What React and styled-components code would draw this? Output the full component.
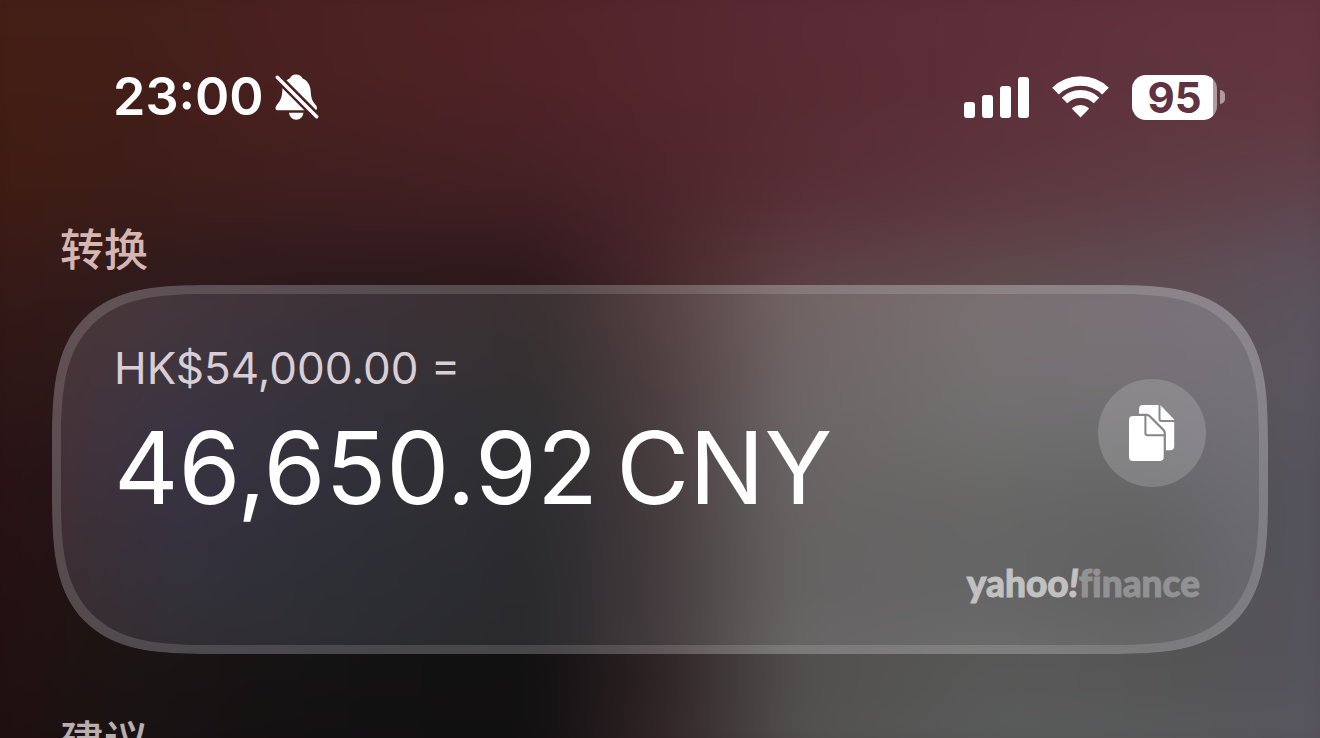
import React from "react";
import styled, { createGlobalStyle, css } from "styled-components";

const GlobalStyle = createGlobalStyle`
  *, *::before, *::after { box-sizing: border-box; }
  html, body { margin: 0; padding: 0; background: #1b1213; }
  body {
    font-family: Inter, "Noto Sans CJK SC", sans-serif;
    color: #fff;
    -webkit-font-smoothing: antialiased;
  }
`;

/* Each row is a vertical position in percent and the colours across it. */
const wallpaper = [
  [0, "#462017, #46201a, #4c2221, #542529, #57272f, #5a2b36, #5f2f3a, #62323e, #65333f"],
  [16, "#431e13, #421e18, #4a2120, #4f2328, #55262d, #582b33, #5d303a, #60353f, #64363f"],
  [29, "#401c12, #3d1d18, #3f1f20, #422024, #4b252b, #582f36, #5d3840, #5f3f47, #5f454f"],
  [38, "#381a16, #321b1c, #2e1a1e, #2f191d, #48282b, #5c4043, #5f4a4d, #5f4e54, #5b5460"],
  [52, "#2f1716, #2a1719, #201619, #1c1315, #3c2628, #5c4a4b, #5e5354, #5b5458, #5a5763"],
  [64, "#2b1114, #221517, #1a1518, #151214, #34272a, #575051, #565555, #525153, #56535f"],
  [89, "#241010, #1b1414, #141313, #111011, #2e2224, #52504f, #585958, #555555, #56535f"],
  [100, "#200f10, #191213, #121012, #121011, #352629, #545453, #5c5f5f, #5d5e60, #5a5866"],
];

const glass = [
  [0, "#4c3738, #48373a, #413437, #3f3133, #5a4345, #756465, #7b6f71, #7b7177, #7a737e"],
  [24, "#4b3536, #41363e, #38323a, #363031, #523f41, #6f6465, #777172, #787277, #77737e"],
  [40, "#493335, #3b3443, #34323c, #303031, #4a3d3f, #6c6565, #70706f, #6f6e71, #75727c"],
  [60, "#432f31, #373240, #303039, #2c2c2f, #453b3d, #676363, #666665, #636364, #706e78"],
  [78, "#3e2c2e, #33313a, #2d2f35, #2a2a2d, #443b3d, #656262, #666666, #606060, #6d6b74"],
  [100, "#382b2c, #322d2f, #2d2c2e, #2a2a2b, #463d3f, #6a6868, #707070, #6d6d6f, #706f78"],
];

const columns = [0, 12, 25, 41, 50, 60, 75, 88, 100];

const stops = (colors) =>
  colors
    .split(", ")
    .map((color, i) => `${color} ${columns[i]}%`)
    .join(", ");

const MeshLayers = styled.div`
  position: absolute;
  inset: -40px;
  filter: blur(24px);
`;

const MeshRow = styled.div`
  position: absolute;
  inset: 0;
  background: linear-gradient(to right, ${(p) => stops(p.$colors)});
  ${(p) =>
    p.$to > 0 &&
    css`
      mask-image: linear-gradient(to bottom, transparent ${p.$from}%, #000 ${p.$to}%);
    `}
`;

function Mesh({ rows }) {
  return (
    <MeshLayers aria-hidden="true">
      {rows.map(([at, colors], i) => (
        <MeshRow key={at} $colors={colors} $from={i ? rows[i - 1][0] : 0} $to={at} />
      ))}
    </MeshLayers>
  );
}

const Screen = styled.div`
  position: relative;
  height: 100vh;
  overflow: hidden;
`;

const Content = styled.div`
  position: relative;
  display: flex;
  flex-direction: column;
  padding: 70px 52px 0;
`;

const StatusBar = styled.header`
  display: flex;
  align-items: center;
  justify-content: space-between;
  height: 54px;
  margin-bottom: 98px;
  padding: 0 43px 0 61px;
`;

const StatusGroup = styled.div`
  display: flex;
  align-items: center;
  gap: ${(p) => p.$gap}px;
`;

const Clock = styled.time`
  font-size: 52px;
  font-weight: 600;
  line-height: 56px;
`;

const Icon = styled.svg`
  display: block;
  flex: none;
  fill: #fff;
`;

const Battery = styled.div`
  display: flex;
  align-items: center;
  gap: 3px;
`;

const BatteryBody = styled.div`
  width: 85px;
  height: 45px;
  border-radius: 14px;
  background: linear-gradient(to right, #fff 81px, rgba(255, 255, 255, 0.5) 81px);
  color: #5f3340;
  font-size: 42px;
  font-weight: 700;
  line-height: 45px;
  text-align: center;
`;

const BatteryNub = styled.div`
  width: 5px;
  height: 14px;
  border-radius: 0 5px 5px 0;
  background: rgba(255, 255, 255, 0.5);
`;

const Sections = styled.main`
  display: flex;
  flex-direction: column;
  gap: 60px;
`;

const Section = styled.section`
  display: flex;
  flex-direction: column;
  gap: 13px;
`;

const SectionTitle = styled.h2`
  margin: 0;
  padding-left: 8px;
  font-family: "Noto Sans CJK SC", sans-serif;
  font-size: 44px;
  font-weight: 500;
  line-height: 50px;
  color: ${(p) => p.$color};
`;

const roundedShape = css`
  border-radius: 112px;
  @supports (corner-shape: superellipse(1.6)) {
    border-radius: 160px;
    corner-shape: superellipse(1.6);
  }
`;

const Card = styled.article`
  position: relative;
  overflow: hidden;
  ${roundedShape}
  &::after {
    content: "";
    position: absolute;
    inset: 0;
    border: 9px solid rgba(255, 255, 255, 0.14);
    pointer-events: none;
    ${roundedShape}
  }
`;

const CardContent = styled.div`
  position: relative;
  display: flex;
  flex-direction: column;
  gap: 37px;
  padding: 55px 62px 51px;
`;

const ResultRow = styled.div`
  display: flex;
  align-items: center;
  justify-content: space-between;
`;

const Amounts = styled.div`
  display: flex;
  flex-direction: column;
  gap: 14px;
`;

const SourceAmount = styled.p`
  margin: 0;
  font-size: 44px;
  font-weight: 400;
  line-height: 56px;
  color: #d8ced6;
`;

const ResultAmount = styled.p`
  margin: 0;
  font-size: 100px;
  font-weight: 400;
  line-height: 116px;
  white-space: nowrap;
`;

const CopyButton = styled.button`
  display: flex;
  flex: none;
  align-items: center;
  justify-content: center;
  width: 108px;
  height: 108px;
  padding: 0;
  border: 0;
  border-radius: 50%;
  background: rgba(255, 255, 255, 0.17);
  cursor: pointer;
`;

const Provider = styled.a`
  align-self: flex-end;
  padding-right: 6px;
  font-family: Lato, sans-serif;
  font-size: 37px;
  font-weight: 900;
  font-variant-ligatures: none;
  line-height: 40px;
  color: #929294;
  text-decoration: none;
  -webkit-text-stroke: 1px currentColor;
`;

const Brand = styled.span`
  color: #c1c1c1;
`;

const Bang = styled.i`
  font-style: italic;
`;

const BELL =
  "M21 .5C17.5 .5 15.5 2.5 15 4.2C9.5 6.5 7.5 11 7.3 17C7 24 5 27 2.5 30C1 32 .5 33 .5 34.3C.5 35.7 1.5 36.3 3 36.3H39.5C41 36.3 42 35.5 42 34C42 32.7 41 31 39.5 29.5C37 26.5 36 23 35.7 17C35.3 11 32.5 6.3 27.3 4.2C26.5 2.3 24.7 .5 21 .5Z";

function BellOffIcon() {
  return (
    <Icon width="44" height="46" viewBox="0 0 44 46" role="img" aria-label="静音">
      <mask id="bell-cut" maskUnits="userSpaceOnUse" x="0" y="0" width="44" height="46">
        <rect width="44" height="46" fill="#fff" />
        <path d="M-4 -3.3L48 49" stroke="#000" strokeWidth="8.4" />
      </mask>
      <g mask="url(#bell-cut)">
        <path d={BELL} />
      </g>
      <path d="M14 38.8H28.4C28 42.8 25 45.7 21.2 45.7C17.4 45.7 14.4 42.8 14 38.8Z" />
      <path d="M2.3 3.2L41.7 42.7" stroke="#fff" strokeWidth="3.4" strokeLinecap="round" />
    </Icon>
  );
}

function SignalIcon() {
  return (
    <Icon width="65" height="41" viewBox="0 0 65 41" role="img" aria-label="信号">
      <rect x="0" y="25" width="11" height="16" rx="3" />
      <rect x="18" y="18" width="11" height="23" rx="3" />
      <rect x="36" y="9" width="11" height="32" rx="3" />
      <rect x="54" y="0" width="11" height="41" rx="3" />
    </Icon>
  );
}

function WifiIcon() {
  return (
    <Icon width="57" height="42" viewBox="0 0 57 42" role="img" aria-label="Wi-Fi">
      <g fill="none" stroke="#fff">
        <path d="M3.5 15.1A36 36 0 0 1 53.5 15.1" strokeWidth="9.6" />
        <path d="M12.5 24.5A23 23 0 0 1 44.5 24.5" strokeWidth="7.8" />
      </g>
      <path d="M28.5 41.4L20.4 33.2Q19.7 32.4 20.6 31.8A13 13 0 0 1 36.4 31.8Q37.3 32.4 36.6 33.2Z" />
    </Icon>
  );
}

const FRONT_DOC =
  "M4 11H17.6Q19 11 20 12L33.7 25.8Q34.7 26.8 34.7 28.3V52A4 4 0 0 1 30.7 56H4A4 4 0 0 1 0 52V15A4 4 0 0 1 4 11Z";

function CopyIcon() {
  return (
    <Icon width="46" height="56" viewBox="0 0 46 56" aria-hidden="true">
      <mask id="back-doc" maskUnits="userSpaceOnUse" x="0" y="0" width="46" height="56">
        <rect width="46" height="56" fill="#fff" />
        <path d={FRONT_DOC} fill="#000" stroke="#000" strokeWidth="4.4" />
        <path d="M30.5 -1V14Q30.5 16 32.5 16H46" fill="none" stroke="#000" strokeWidth="2" />
      </mask>
      <mask id="front-doc" maskUnits="userSpaceOnUse" x="0" y="0" width="46" height="56">
        <rect width="46" height="56" fill="#fff" />
        <path d="M16.4 10V28Q16.4 30.3 18.7 30.3H36" fill="none" stroke="#000" strokeWidth="2" />
      </mask>
      <path
        mask="url(#back-doc)"
        d="M14 0H31.2L45.2 14.4V41.3A4 4 0 0 1 41.2 45.3H20V12H10V4A4 4 0 0 1 14 0Z"
      />
      <path mask="url(#front-doc)" d={FRONT_DOC} />
    </Icon>
  );
}

export default function App() {
  return (
    <>
      <GlobalStyle />
      <Screen>
        <Mesh rows={wallpaper} />
        <Content>
          <StatusBar>
            <StatusGroup $gap={11}>
              <Clock dateTime="23:00">23:00</Clock>
              <BellOffIcon />
            </StatusGroup>
            <StatusGroup $gap={23}>
              <SignalIcon />
              <WifiIcon />
              <Battery>
                <BatteryBody>95</BatteryBody>
                <BatteryNub />
              </Battery>
            </StatusGroup>
          </StatusBar>
          <Sections>
            <Section>
              <SectionTitle $color="#d5b6b1">转换</SectionTitle>
              <Card>
                <Mesh rows={glass} />
                <CardContent>
                  <ResultRow>
                    <Amounts>
                      <SourceAmount>HK$54,000.00 =</SourceAmount>
                      <ResultAmount>46,650.92{"\u2009"}CNY</ResultAmount>
                    </Amounts>
                    <CopyButton type="button" aria-label="拷贝">
                      <CopyIcon />
                    </CopyButton>
                  </ResultRow>
                  <Provider href="#finance">
                    <Brand>
                      yahoo<Bang>!</Bang>
                    </Brand>
                    finance
                  </Provider>
                </CardContent>
              </Card>
            </Section>
            <Section>
              <SectionTitle $color="#b9adad">建议</SectionTitle>
            </Section>
          </Sections>
        </Content>
      </Screen>
    </>
  );
}
